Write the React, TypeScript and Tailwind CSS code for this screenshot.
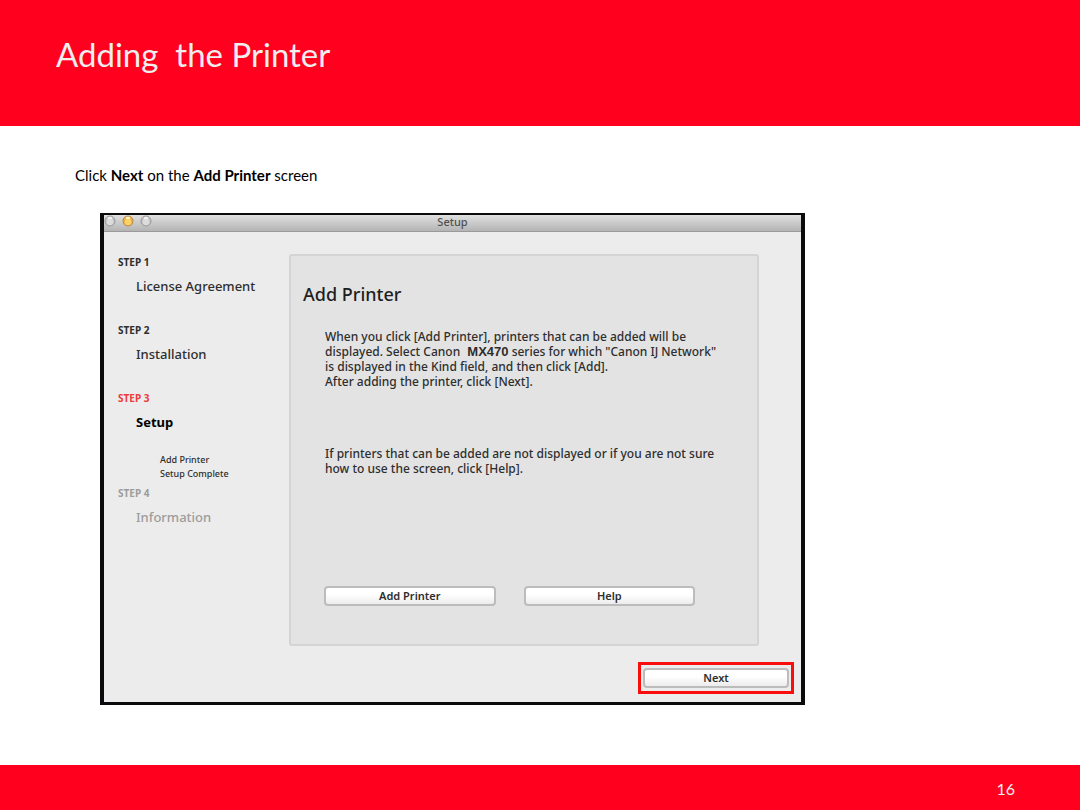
import type { ReactNode } from 'react';

type StepProps = {
  label: string;
  title: string;
  state?: 'normal' | 'current' | 'pending';
  children?: ReactNode;
};

const labelColors = {
  normal: 'text-[#2e2e2e]',
  current: 'text-[#ee3a3a]',
  pending: 'text-[#9c9c9c]',
};

const titleColors = {
  normal: 'text-[#2e2e2e] font-medium',
  current: 'text-black font-bold',
  pending: 'text-[#9c9c9c] font-medium',
};

function Step({ label, title, state = 'normal', children }: StepProps) {
  return (
    <li>
      <p className={`text-[10px] leading-4 font-bold ${labelColors[state]}`}>{label}</p>
      <p className={`pl-[18px] text-[13px] leading-8 ${titleColors[state]}`}>{title}</p>
      {children}
    </li>
  );
}

function Light({ amber = false }: { amber?: boolean }) {
  return (
    <svg width="12" height="12" viewBox="0 0 12 12" aria-hidden="true">
      <circle cx="6" cy="6" r="5" fill={amber ? '#eeb23c' : '#c6c6c6'} stroke={amber ? '#b98a4a' : '#999999'} />
      <circle cx="6" cy="7" r="3.2" fill={amber ? '#fbd268' : '#dcdcdc'} />
      <ellipse cx="6" cy="3" rx="2.4" ry="1.2" fill={amber ? '#fff0c8' : '#f0f0f0'} />
    </svg>
  );
}

function MacButton({ children }: { children: ReactNode }) {
  return (
    <button
      type="button"
      className="block h-5 w-full rounded-[4px] border-2 border-[#bcbcbc] bg-linear-to-b from-white from-40% to-[#ececec] text-[11px] leading-4 font-semibold text-[#2e2e2e]"
    >
      {children}
    </button>
  );
}

function SetupWindow() {
  return (
    <section
      aria-label="Setup"
      className="w-full max-w-[705px] border-4 border-t-2 border-b-3 border-[#0b0b0e] bg-[#ececec] font-['Noto_Sans',sans-serif] text-[#2e2e2e]"
    >
      <header className="grid h-[17px] grid-cols-[1fr_auto_1fr] items-start border-b border-[#9a9a9a] bg-linear-to-b from-[#e0e0e0] to-[#b4b4b4]">
        <div className="flex gap-[6px]">
          <Light />
          <Light amber />
          <Light />
        </div>
        <h2 className="text-[11px] leading-[14px] font-medium text-[#505050]">Setup</h2>
      </header>
      <div className="flex pt-[22px] pr-[42px]">
        <ol className="flex w-[185px] shrink-0 flex-col pl-[14px]">
          <Step label="STEP 1" title="License Agreement" />
          <li className="h-5" aria-hidden="true" />
          <Step label="STEP 2" title="Installation" />
          <li className="h-5" aria-hidden="true" />
          <Step label="STEP 3" title="Setup" state="current">
            <ul className="pt-[15px] pb-1 pl-[42px] text-[9px] leading-[14px] font-medium">
              <li>Add Printer</li>
              <li>Setup Complete</li>
            </ul>
          </Step>
          <Step label="STEP 4" title="Information" state="pending" />
        </ol>
        <div className="min-w-0 flex-1 rounded-[3px] border-2 border-[#d4d4d4] bg-[#e3e3e3] px-3 pt-[26px] pb-[38px]">
          <h3 className="text-[18px] leading-6 font-medium text-[#1e1e1e]">Add Printer</h3>
          <div className="pt-[23px] pl-[22px] text-[12px] leading-[15px] font-medium">
            <p>
              When you click [Add Printer], printers that can be added will be
              <br />
              displayed. Select Canon{' '}
              <b className="pl-1 font-['Liberation_Sans',sans-serif] text-[13px] leading-none">MX470</b> series for which
              "Canon IJ Network"
              <br />
              is displayed in the Kind field, and then click [Add].
              <br />
              After adding the printer, click [Next].
            </p>
            <p className="pt-[57px]">
              If printers that can be added are not displayed or if you are not sure
              <br />
              how to use the screen, click [Help].
            </p>
          </div>
          <div className="grid grid-cols-2 gap-7 pt-[110px] pr-[50px] pl-[21px]">
            <MacButton>Add Printer</MacButton>
            <MacButton>Help</MacButton>
          </div>
        </div>
      </div>
      <div className="flex justify-end pt-4 pr-[7px] pb-2">
        <div className="w-[156px] border-3 border-[#f90d0d] px-[2px] py-[3px]">
          <MacButton>Next</MacButton>
        </div>
      </div>
    </section>
  );
}

export default function App() {
  return (
    <div className="flex min-h-screen flex-col bg-white font-['Lato',sans-serif] text-black">
      <header className="bg-[#ff001f] px-14 pt-[30px] pb-12">
        <h1 className="text-[33px] leading-[48px] whitespace-pre-wrap text-[#f2eeee]">{'Adding  the Printer'}</h1>
      </header>
      <main className="flex-1 px-[75px] pt-[39px]">
        <p className="text-[15px] leading-5">
          Click <b>Next</b> on the <b>Add Printer</b> screen
        </p>
        <div className="pt-7 pl-[25px]">
          <SetupWindow />
        </div>
      </main>
      <footer className="bg-[#ff001f] px-[65px] pt-3 pb-[9px] text-right text-[16px] leading-6 text-[#f2eeee]">16</footer>
    </div>
  );
}
